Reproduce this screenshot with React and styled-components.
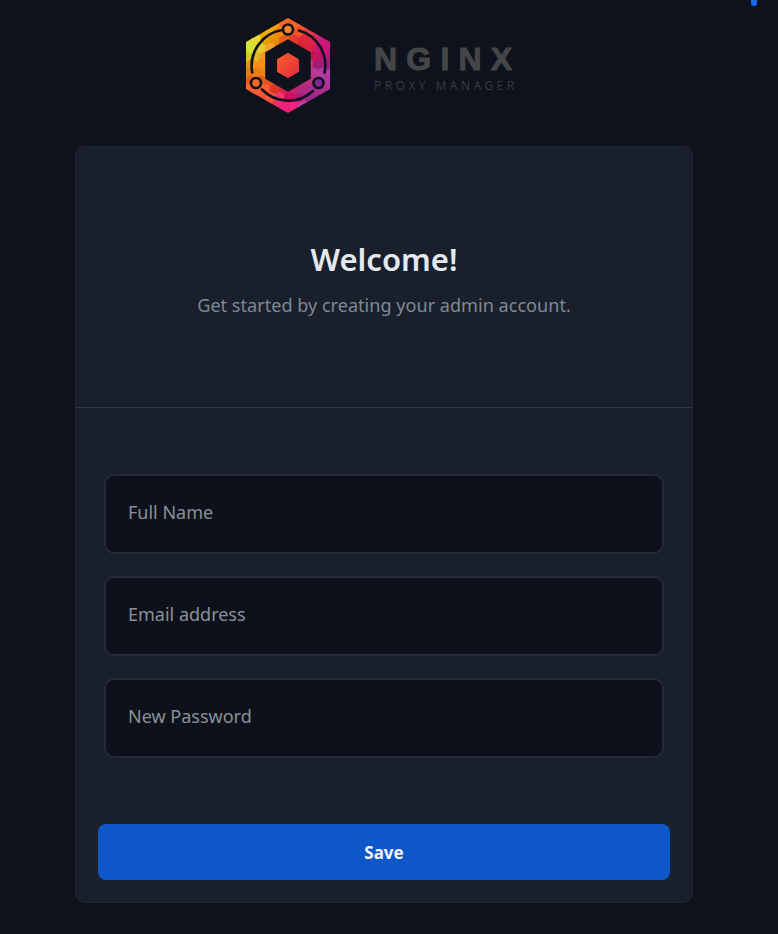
import React from 'react';
import styled, { createGlobalStyle } from 'styled-components';

const GlobalStyle = createGlobalStyle`
  html, body {
    margin: 0;
    padding: 0;
    background: #0e121c;
  }
  * {
    box-sizing: border-box;
  }
`;

const Page = styled.div`
  position: relative;
  width: 778px;
  height: 934px;
  overflow: hidden;
  font-family: "Noto Sans", "Open Sans", sans-serif;
  background: #0e121c;
`;

const LoadingDot = styled.div`
  position: absolute;
  top: -2px;
  left: 751px;
  width: 6px;
  height: 8px;
  border-radius: 3px;
  background: #1668f0;
`;

const Brand = styled.header`
  display: flex;
  align-items: flex-start;
  gap: 44px;
  height: 146px;
  padding: 18px 0 0 246px;
`;

const Wordmark = styled.div`
  display: flex;
  flex-direction: column;
  width: 146px;
  padding-top: 23px;
  color: #454648;
`;

const WordmarkTitle = styled.div`
  font-family: "Liberation Sans", "Noto Sans", sans-serif;
  font-size: 32px;
  line-height: 37px;
  font-weight: 700;
  letter-spacing: 9.2px;
  -webkit-text-stroke: 1px #454648;
  white-space: nowrap;
`;

const WordmarkSub = styled.div`
  font-size: 12px;
  line-height: 15px;
  letter-spacing: 3.45px;
  color: #36383d;
  white-space: nowrap;
`;

const Card = styled.main`
  width: 618px;
  height: 757px;
  margin-left: 75px;
  display: flex;
  flex-direction: column;
  background: #19202b;
  border: 1px solid #202632;
  border-radius: 10px;
`;

const CardHead = styled.div`
  height: 261px;
  padding-top: 90px;
  text-align: center;
  border-bottom: 1px solid #2e3543;
`;

const Title = styled.h1`
  margin: 0;
  font-size: 31px;
  line-height: 44px;
  font-weight: 600;
  color: #e4e8ef;
`;

const Subtitle = styled.p`
  margin: 11px 0 0;
  font-size: 18.1px;
  line-height: 26px;
  color: #7f8896;
`;

const Form = styled.form`
  display: flex;
  flex-direction: column;
  padding: 66px 22px 0;
`;

const Fields = styled.div`
  display: flex;
  flex-direction: column;
  gap: 22px;
  padding: 0 6px;
`;

const Field = styled.input`
  width: 100%;
  height: 80px;
  padding: 0 22px 5px;
  font-family: inherit;
  font-size: 18px;
  color: #e4e8ef;
  background: #0d111b;
  border: 2px solid #252b38;
  border-radius: 10px;
  outline: none;

  &::placeholder {
    color: #8b9098;
    opacity: 1;
  }
`;

const SaveButton = styled.button`
  height: 56px;
  margin-top: 66px;
  font-family: inherit;
  font-size: 17px;
  font-weight: 700;
  color: #f4f6fa;
  background: #0e57c9;
  border: none;
  border-radius: 8px;
`;

// anchors for the low-poly colouring of the logo [x, y, colour]
const anchors = [
  [4, 30, [200, 220, 40]],
  [22, 14, [250, 180, 10]],
  [16, 50, [248, 140, 25]],
  [46, 8, [245, 95, 25]],
  [18, 76, [242, 75, 40]],
  [60, 26, [228, 40, 60]],
  [78, 28, [205, 20, 125]],
  [80, 55, [160, 45, 150]],
  [64, 82, [165, 50, 150]],
  [42, 88, [230, 20, 115]],
  [42, 47, [225, 30, 70]],
];

const cellColour = (x, y, seed) => {
  let total = 0;
  const mix = [0, 0, 0];
  anchors.forEach(([ax, ay, c]) => {
    const w = 1 / Math.pow((x - ax) ** 2 + (y - ay) ** 2 + 20, 1.6);
    total += w;
    c.forEach((v, i) => {
      mix[i] += v * w;
    });
  });
  // each facet a bit lighter or darker so the low-poly look shows
  const shade = ((seed * 37) % 11) * 3.2 - 16;
  return `rgb(${mix.map((v) => Math.max(0, Math.min(255, Math.round(v / total + shade)))).join(',')})`;
};

const hexPoints = (cx, cy, r) =>
  [0, 1, 2, 3, 4, 5]
    .map((i) => {
      const a = (Math.PI / 3) * i - Math.PI / 2;
      return `${(cx + r * Math.cos(a)).toFixed(1)},${(cy + r * Math.sin(a)).toFixed(1)}`;
    })
    .join(' ');

const cells = [];
for (let row = 0; row < 13; row++) {
  for (let col = 0; col < 12; col++) {
    const x = col * 9.5 + (row % 2 ? 4.75 : 0) - 4;
    const y = row * 8.2 - 2;
    cells.push({ x, y, fill: cellColour(x, y, row * 5 + col * 3 + 1) });
  }
}

const DARK = '#0e121c';

const Logo = () => (
  <svg width="84" height="96" viewBox="0 0 84 96">
    <defs>
      <clipPath id="logo-hex">
        <polygon points="42,0 84,24 84,71 42,95 0,71 0,24" />
      </clipPath>
      <linearGradient id="logo-core" x1="0" y1="0" x2="1" y2="1">
        <stop offset="0" stopColor="#f4632a" />
        <stop offset="1" stopColor="#e8273f" />
      </linearGradient>
    </defs>
    <g clipPath="url(#logo-hex)">
      {cells.map((c) => (
        <polygon key={`${c.x}-${c.y}`} points={hexPoints(c.x, c.y, 5.9)} fill={c.fill} stroke={c.fill} strokeWidth="0.6" />
      ))}
    </g>
    <g fill="none" stroke={DARK} strokeWidth="2.6" strokeLinecap="round">
      <path d="M36 12 A36.5 36.5 0 0 0 6.2 54.5" />
      <path d="M16 71.5 A36.5 36.5 0 0 0 67 73" />
      <path d="M53 12.5 A36.5 36.5 0 0 1 78.6 55" />
    </g>
    <polygon points={hexPoints(42, 47.5, 19.4)} fill="none" stroke={DARK} strokeWidth="12" />
    <polygon points={hexPoints(42, 47.5, 12.5)} fill="url(#logo-core)" />
    <circle cx="42" cy="11.5" r="5" fill="#f2862a" stroke={DARK} strokeWidth="2.6" />
    <circle cx="10" cy="65" r="5" fill="#f26a2a" stroke={DARK} strokeWidth="2.6" />
    <circle cx="72.5" cy="65" r="5" fill="#7d2a8a" stroke={DARK} strokeWidth="2.6" />
  </svg>
);

export default function App() {
  return (
    <Page>
      <GlobalStyle />
      <LoadingDot />
      <Brand>
        <Logo />
        <Wordmark>
          <WordmarkTitle>NGINX</WordmarkTitle>
          <WordmarkSub>PROXY MANAGER</WordmarkSub>
        </Wordmark>
      </Brand>
      <Card>
        <CardHead>
          <Title>Welcome!</Title>
          <Subtitle>Get started by creating your admin account.</Subtitle>
        </CardHead>
        <Form>
          <Fields>
            <Field placeholder="Full Name" />
            <Field placeholder="Email address" />
            <Field type="password" placeholder="New Password" />
          </Fields>
          <SaveButton type="button">Save</SaveButton>
        </Form>
      </Card>
    </Page>
  );
}
